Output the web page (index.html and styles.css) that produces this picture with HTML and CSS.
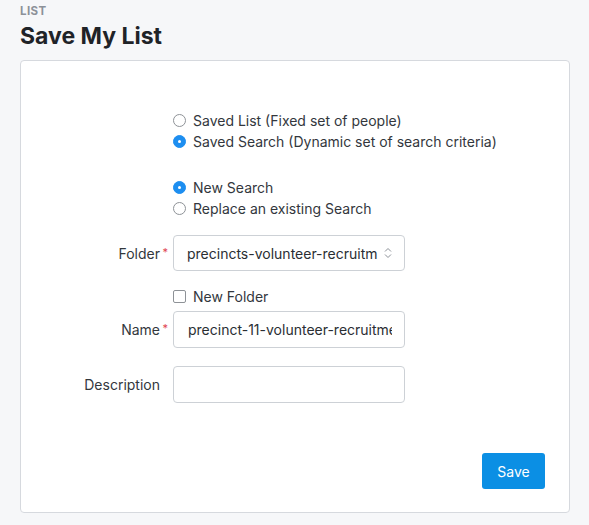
FILE: index.html
```html
<!DOCTYPE html>
<html>
<head>
<meta charset="utf-8">
<link rel="stylesheet" href="styles.css">
</head>
<body>
<div class="page">
  <div class="eyebrow">LIST</div>
  <h1 class="title">Save My List</h1>
  <div class="card">
    <div class="form">
      <div class="label"></div>
      <div class="options">
        <label class="opt"><span class="radio"></span>Saved List (Fixed set of people)</label>
        <label class="opt"><span class="radio on"></span>Saved Search (Dynamic set of search criteria)</label>
      </div>
      <div class="label"></div>
      <div class="options second">
        <label class="opt"><span class="radio on"></span>New Search</label>
        <label class="opt"><span class="radio"></span>Replace an existing Search</label>
      </div>
      <div class="label field-label">Folder<span class="req">*</span></div>
      <div class="control select">
        <span class="value">precincts-volunteer-recruitm</span>
        <svg class="chev" width="8" height="12" viewBox="0 0 8 12"><path d="M1 4.5 L4 1.5 L7 4.5 M1 7.5 L4 10.5 L7 7.5" fill="none" stroke="#8a8f96" stroke-width="1"/></svg>
      </div>
      <div class="label"></div>
      <label class="opt check-row"><span class="check"></span>New Folder</label>
      <div class="label field-label spaced">Name<span class="req">*</span></div>
      <div class="control name spaced"><span class="value">precinct-11-volunteer-recruitme</span></div>
      <div class="label field-label">Description</div>
      <div class="control"></div>
    </div>
    <div class="actions"><button class="btn">Save</button></div>
  </div>
</div>
</body>
</html>
```
FILE: styles.css
```css
html, body { margin: 0; padding: 0; background: #f6f7f9; }
body { font-family: Inter, "Noto Sans", sans-serif; color: #33373d; }
.page { padding: 6px 19px 0 20px; }
.eyebrow { font-size: 11.5px; font-weight: 700; color: #8c9199; letter-spacing: 0.4px; line-height: 11px; height: 11px; }
.title { margin: 5px 0 0; font-size: 23px; line-height: 28px; font-weight: 700; color: #1f2328; }
.card { margin-top: 10px; background: #fff; border: 1px solid #d6d9de; border-radius: 4px; height: 453px; box-sizing: border-box; padding: 49px 24px 0 0; display: flex; flex-direction: column; }
.form { display: grid; grid-template-columns: 139px 232px; column-gap: 13px; align-items: center; }
.options { display: flex; flex-direction: column; }
.options.second { margin-top: 25px; margin-bottom: 16px; }
.opt { display: flex; align-items: center; height: 21px; font-size: 14px; color: #33373d; white-space: nowrap; }
.radio { width: 11px; height: 11px; border: 1px solid #8e9297; border-radius: 50%; margin-right: 7px; box-sizing: content-box; position: relative; flex: none; }
.radio.on { background: #1d8ef0; border-color: #1d8ef0; }
.radio.on::after { content: ""; position: absolute; left: 4px; top: 4px; width: 3px; height: 3px; border-radius: 50%; background: #fff; }
.check { width: 11px; height: 11px; border: 1px solid #8e9297; border-radius: 2px; margin-right: 7px; flex: none; }
.check-row { margin: 15px 0 4px; height: 21px; }
.field-label { text-align: right; font-size: 14px; color: #33373d; white-space: nowrap; position: relative; }
.req { color: #e0454f; font-size: 11px; position: absolute; right: -8px; top: 0; }
.control { height: 37px; border: 1px solid #cdd1d6; border-radius: 4px; box-sizing: border-box; display: flex; align-items: center; padding: 0 12px 0 13px; font-size: 14px; color: #2a2e33; overflow: hidden; white-space: nowrap; }
.spaced { margin-bottom: 18px; }
.control.name { padding-left: 14px; }
.select { justify-content: space-between; height: 36px; }
.value { overflow: hidden; white-space: nowrap; }
.chev { flex: none; margin-left: 6px; }
.actions { margin-top: auto; display: flex; justify-content: flex-end; padding-bottom: 23px; }
.btn { background: #0b8fe4; color: #fff; border: none; border-radius: 3px; font-family: Inter, sans-serif; font-size: 14px; width: 63px; height: 36px; }
```
